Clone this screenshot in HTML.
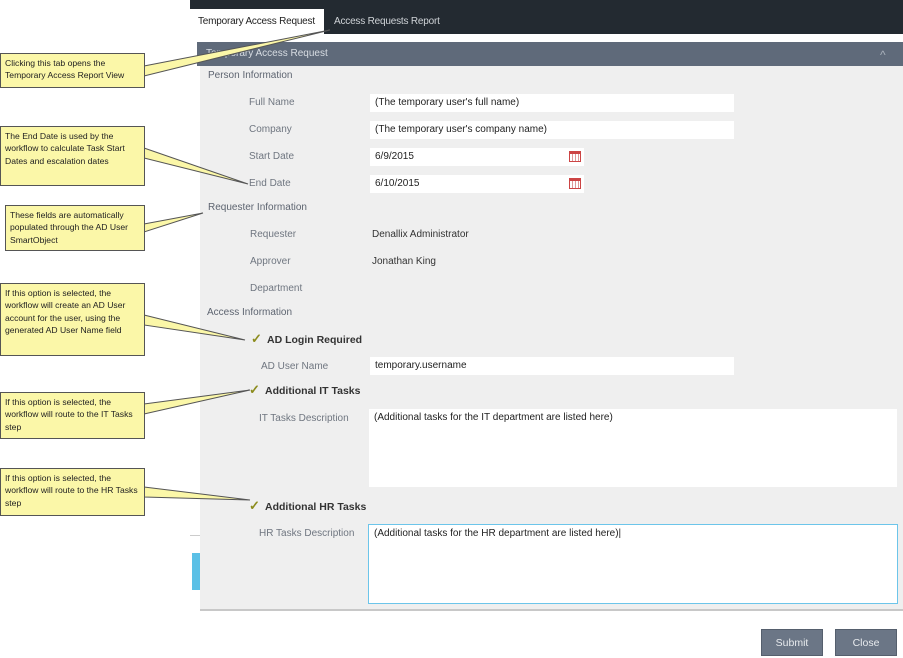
<!DOCTYPE html>
<html><head><meta charset="utf-8"><style>
*{box-sizing:border-box;margin:0;padding:0}
body{width:903px;height:658px;position:relative;background:#fff;font-family:"Liberation Sans",sans-serif;overflow:hidden}
.a{position:absolute;white-space:nowrap}
.top{left:190px;top:0;width:713px;height:34px;background:#232a31}
.tab1{left:190px;top:9px;width:134px;height:25px;background:#fff;font-size:10px;color:#222;padding:7px 0 0 8px;letter-spacing:-0.2px}
.tab2{left:334px;top:16px;font-size:10px;color:#cfd3d7;letter-spacing:-0.2px}
.ph{left:197px;top:42px;width:706px;height:24px;background:#5f6a7a;color:#d8dde3;font-size:10px;padding:6px 0 0 9px}
.body{left:200px;top:66px;width:703px;height:545px;background:#efefef;border-bottom:2px solid #c8c8c8}
.sec{font-size:10px;color:#5d6470}
.lbl{font-size:10px;color:#6f7680}
.val{font-size:10px;color:#333}
.in{background:#fff;height:18px;font-size:10px;color:#222;padding:3px 0 0 5px}
.cb{font-size:10.5px;color:#333;font-weight:bold}
.ck{color:#8c8c1e;font-size:13px;font-weight:bold}
.co{background:#fbf7a8;border:1px solid #555;font-size:8.6px;line-height:12.3px;color:#222;padding:3px 4px;white-space:normal}
.btn{height:27px;width:62px;background:#6b7686;color:#e8ebee;font-size:10.5px;text-align:center;padding-top:7px;border:1px solid #555f6d}
</style></head><body>
<div class="a top"></div>
<div class="a tab1">Temporary Access Request</div>
<div class="a tab2">Access Requests Report</div>
<div class="a ph">Temporary Access Request</div>
<div class="a" style="left:880px;top:48px;color:#aab2bc;font-size:12px">^</div>
<div class="a body"></div>
<div class="a" style="left:190px;top:535px;width:10px;height:1px;background:#ccc"></div>
<div class="a" style="left:192px;top:553px;width:8px;height:37px;background:#5bc0e6"></div>

<div class="a sec" style="left:208px;top:70px">Person Information</div>
<div class="a lbl" style="left:249px;top:97px">Full Name</div>
<div class="a in" style="left:370px;top:94px;width:364px">(The temporary user's full name)</div>
<div class="a lbl" style="left:249px;top:124px">Company</div>
<div class="a in" style="left:370px;top:121px;width:364px">(The temporary user's company name)</div>
<div class="a lbl" style="left:249px;top:151px">Start Date</div>
<div class="a in" style="left:370px;top:148px;width:214px">6/9/2015</div>
<div class="a lbl" style="left:249px;top:178px">End Date</div>
<div class="a in" style="left:370px;top:175px;width:214px">6/10/2015</div>
<div class="a" style="left:569px;top:151px;width:12px;height:11px;border:1px solid #c44;border-top:3px solid #c44;background:repeating-linear-gradient(90deg,#fff 0 2px,#d99 2px 3px)"></div>
<div class="a" style="left:569px;top:178px;width:12px;height:11px;border:1px solid #c44;border-top:3px solid #c44;background:repeating-linear-gradient(90deg,#fff 0 2px,#d99 2px 3px)"></div>

<div class="a sec" style="left:208px;top:202px">Requester Information</div>
<div class="a lbl" style="left:250px;top:229px">Requester</div>
<div class="a val" style="left:372px;top:229px">Denallix Administrator</div>
<div class="a lbl" style="left:250px;top:256px">Approver</div>
<div class="a val" style="left:372px;top:256px">Jonathan King</div>
<div class="a lbl" style="left:250px;top:283px">Department</div>

<div class="a sec" style="left:207px;top:307px">Access Information</div>
<div class="a ck" style="left:251px;top:331px">✓</div>
<div class="a cb" style="left:267px;top:334px">AD Login Required</div>
<div class="a lbl" style="left:261px;top:361px">AD User Name</div>
<div class="a in" style="left:370px;top:357px;width:364px">temporary.username</div>
<div class="a ck" style="left:249px;top:382px">✓</div>
<div class="a cb" style="left:265px;top:385px">Additional IT Tasks</div>
<div class="a lbl" style="left:259px;top:413px">IT Tasks Description</div>
<div class="a in" style="left:369px;top:409px;width:528px;height:78px">(Additional tasks for the IT department are listed here)</div>
<div class="a ck" style="left:249px;top:498px">✓</div>
<div class="a cb" style="left:265px;top:501px">Additional HR Tasks</div>
<div class="a lbl" style="left:259px;top:528px">HR Tasks Description</div>
<div class="a in" style="left:368px;top:524px;width:530px;height:80px;border:1px solid #6cc5ea">(Additional tasks for the HR department are listed here)|</div>

<div class="a btn" style="left:761px;top:629px">Submit</div>
<div class="a btn" style="left:835px;top:629px">Close</div>

<svg class="a" style="left:0;top:0" width="903" height="658">
<g fill="#fbf7a8" stroke="#555" stroke-width="1">
<polygon points="144,66 330,30 144,76"/>
<polygon points="144,148 248,184 144,158"/>
<polygon points="144,224 203,213 144,232"/>
<polygon points="144,315 245,340 144,325"/>
<polygon points="144,404 250,390 144,414"/>
<polygon points="144,487 250,500 144,497"/>
</g></svg>
<div class="a co" style="left:0;top:53px;width:145px;height:35px">Clicking this tab opens the Temporary Access Report View</div>
<div class="a co" style="left:0;top:126px;width:145px;height:60px">The End Date is used by the workflow to calculate Task Start Dates and escalation dates</div>
<div class="a co" style="left:5px;top:205px;width:140px;height:46px">These fields are automatically populated through the AD User SmartObject</div>
<div class="a co" style="left:0;top:283px;width:145px;height:73px">If this option is selected, the workflow will create an AD User account for the user, using the generated AD User Name field</div>
<div class="a co" style="left:0;top:392px;width:145px;height:47px">If this option is selected, the workflow will route to the IT Tasks step</div>
<div class="a co" style="left:0;top:468px;width:145px;height:48px">If this option is selected, the workflow will route to the HR Tasks step</div>
</body></html>
